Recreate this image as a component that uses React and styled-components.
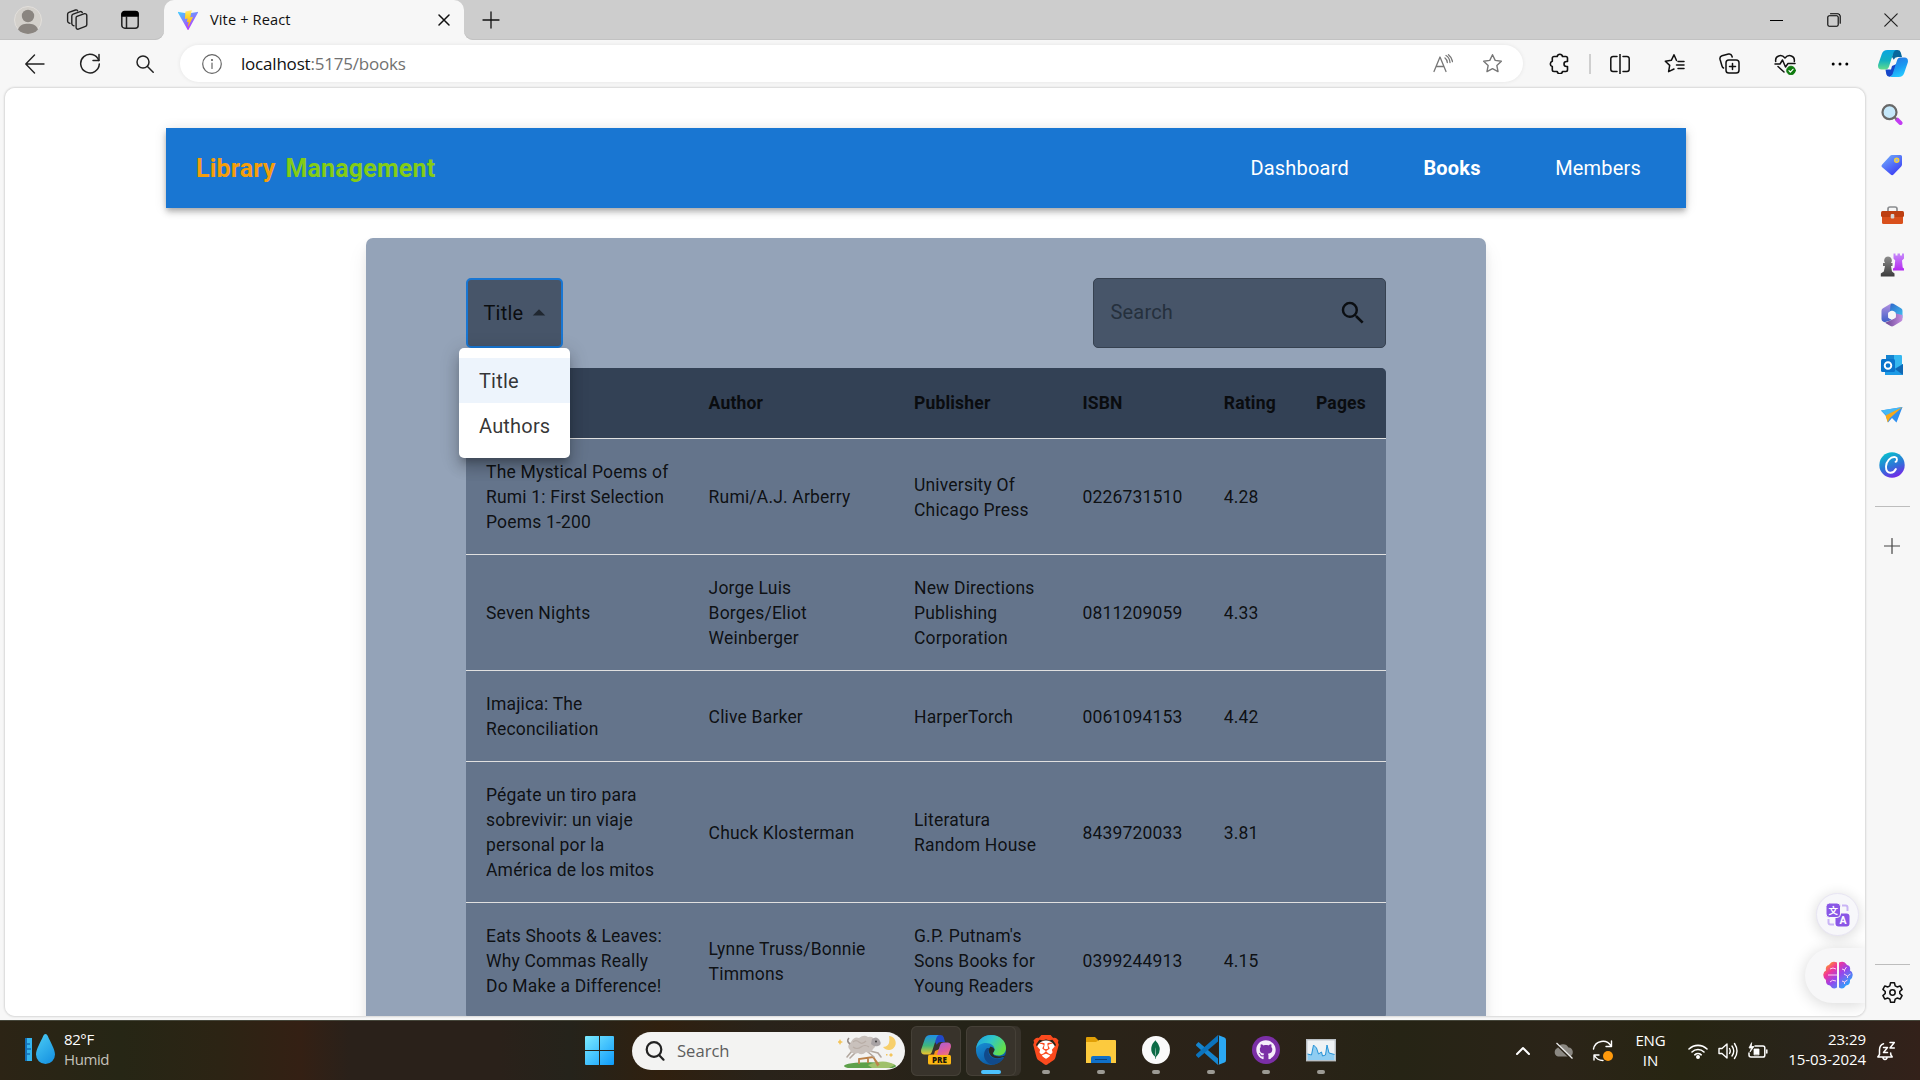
import React from 'react';
import styled, { createGlobalStyle, css } from 'styled-components';
import { MdSearch, MdArrowDropUp } from 'react-icons/md';
import { SiBrave, SiMongodb } from 'react-icons/si';
import { FaGithub } from 'react-icons/fa';

const Global = createGlobalStyle`
  *, *::before, *::after { box-sizing: border-box; }
  html, body { margin: 0; padding: 0; overflow: hidden; }
  svg { display: block; flex: none; }
`;

const SYSTEM = `"Open Sans", "Noto Sans", sans-serif`;
const WEB = `Roboto, "Liberation Sans", sans-serif`;

const Screen = styled.div`
  width: 1920px;
  height: 1080px;
  display: flex;
  flex-direction: column;
  background: #f7f7f7;
  font-family: ${SYSTEM};
  overflow: hidden;
`;

const Slot = styled.div`
  width: ${(p) => p.$w || 55}px;
  height: ${(p) => (p.$h ? p.$h + 'px' : '100%')};
  display: flex;
  align-items: center;
  justify-content: center;
  flex: none;
`;

/* Tab strip */
const TabStrip = styled.header`
  height: 40px;
  display: flex;
  flex: none;
`;
const StripLeft = styled.div`
  width: 164px;
  display: flex;
  align-items: center;
  background: #cdcdcd;
  border-bottom-right-radius: 9px;
  box-shadow: inset 0 -1px 0 #c2c2c2;
`;
const StripRight = styled.div`
  flex: 1;
  display: flex;
  align-items: center;
  background: #cdcdcd;
  border-bottom-left-radius: 9px;
  box-shadow: inset 0 -1px 0 #c2c2c2;
`;
const TabSlot = styled.div`
  width: 300px;
  background: linear-gradient(#cdcdcd 50%, #f7f7f7 50%);
`;
const Tab = styled.div`
  height: 40px;
  display: flex;
  align-items: center;
  padding: 0 10px 0 14px;
  background: #f7f7f7;
  border-radius: 10px 10px 0 0;
`;
const TabTitle = styled.span`
  flex: 1;
  margin-left: 12px;
  padding-bottom: 2px;
  font-size: 14.6px;
  line-height: 20px;
  letter-spacing: 0.12px;
  color: #111;
`;
const Spacer = styled.div`
  flex: 1;
`;

/* Toolbar */
const Toolbar = styled.div`
  height: 48px;
  flex: none;
  display: flex;
  align-items: center;
  padding: 0 0 1px 7px;
`;
const AddressBar = styled.div`
  width: 1343px;
  height: 37px;
  margin-left: 8px;
  display: flex;
  align-items: center;
  border-radius: 19px;
  background: #fff;
  box-shadow: 0 0 4px rgba(0, 0, 0, 0.08);
  padding-left: 22px;
`;
const Url = styled.span`
  flex: 1;
  margin-left: 19px;
  font-size: 17px;
  line-height: 24px;
  letter-spacing: -0.2px;
  color: #717171;
  b {
    font-weight: 400;
    color: #111;
  }
`;
const BarDivider = styled.div`
  width: 2px;
  height: 20px;
  margin-right: 1px;
  background: #cfcfcf;
`;

/* Body */
const Middle = styled.div`
  height: 932px;
  flex: none;
  display: flex;
  padding-left: 5px;
`;
const Viewport = styled.main`
  position: relative;
  width: 1860px;
  height: 928px;
  background: #fff;
  border-radius: 10px;
  overflow: hidden;
  padding: 40px 179px 0 161px;
  font-family: ${WEB};
`;
const ViewportFrame = styled.div`
  height: 928px;
  border-radius: 10px;
  box-shadow: 0 0 2px 1px rgba(0, 0, 0, 0.13);
`;
const NavBar = styled.nav`
  height: 80px;
  display: flex;
  align-items: center;
  padding: 0 45px 0 30px;
  background: #1976d2;
  color: #fff;
  box-shadow: 0 2.5px 5px -1px rgba(0, 0, 0, 0.2), 0 5px 6px rgba(0, 0, 0, 0.14),
    0 1px 12px rgba(0, 0, 0, 0.12);
`;
const Brand = styled.div`
  flex: 1;
  display: flex;
  gap: 10px;
  padding-top: 2px;
  font-size: 25px;
  font-weight: 700;
  line-height: 40px;
  letter-spacing: 0.17px;
`;
const BrandWord = styled.span`
  color: ${(p) => p.$color};
`;
const NavLinks = styled.div`
  display: flex;
  gap: 74.5px;
`;
const NavLink = styled.a`
  font-size: 20px;
  line-height: 30px;
  letter-spacing: 0.188px;
  font-weight: ${(p) => (p.$active ? 700 : 400)};
`;
const Panel = styled.section`
  margin: 30px auto 0;
  width: 1120px;
  height: 900px;
  padding: 40px 100px 0;
  background: #94a3b8;
  border-radius: 7px;
  box-shadow: 0 12px 20px rgba(0, 0, 0, 0.08), 0 5px 8px rgba(0, 0, 0, 0.06);
`;
const Controls = styled.div`
  display: flex;
  justify-content: space-between;
  margin-bottom: 20px;
`;
const SelectWrap = styled.div`
  position: relative;
`;
const SelectBox = styled.div`
  width: 97px;
  height: 70px;
  display: flex;
  align-items: center;
  padding-left: 15.5px;
  border: 2px solid #1976d2;
  border-radius: 5px;
  background: #475569;
  color: rgba(0, 0, 0, 0.87);
  font-size: 20px;
  letter-spacing: 0.19px;
  svg {
    margin-left: 0.5px;
    color: rgba(0, 0, 0, 0.54);
  }
`;
const Menu = styled.ul`
  position: absolute;
  left: -7px;
  top: 70px;
  z-index: 2;
  width: 111px;
  margin: 0;
  padding: 10px 0;
  list-style: none;
  background: #fff;
  border-radius: 5px;
  box-shadow: 0 6px 6px -3px rgba(0, 0, 0, 0.2), 0 10px 13px 1px rgba(0, 0, 0, 0.14),
    0 4px 18px 3px rgba(0, 0, 0, 0.12);
`;
const MenuItem = styled.li`
  height: 45px;
  padding: 1px 20px 0;
  font-size: 20px;
  line-height: 45px;
  letter-spacing: 0.19px;
  color: rgba(0, 0, 0, 0.8);
  background: ${(p) => (p.$selected ? '#edf4fc' : 'transparent')};
`;
const SearchField = styled.div`
  width: 293px;
  height: 70px;
  display: flex;
  align-items: center;
  justify-content: space-between;
  padding: 0 17px 0 16.5px;
  border: 1px solid #364150;
  border-radius: 5px;
  background: #475569;
  font-size: 20px;
  letter-spacing: 0.19px;
  color: #25303d;
  span {
    padding-bottom: 2px;
  }
  svg {
    color: #0b0e12;
  }
`;
const Table = styled.table`
  width: 920px;
  table-layout: fixed;
  border-collapse: separate;
  border-spacing: 0;
  border-radius: 5px;
  overflow: hidden;
  background: #64748b;
`;
const cell = css`
  padding: 20px;
  text-align: left;
  vertical-align: middle;
  border-bottom: 1px solid #e0e0e0;
  font-size: 17.5px;
  letter-spacing: 0.187px;
`;
const Th = styled.th`
  ${cell}
  width: ${(p) => p.$w}px;
  height: 71px;
  line-height: 30px;
  font-weight: 700;
  color: #0a0c0f;
  background: #334155;
`;
const Td = styled.td`
  ${cell}
  padding: 21px 20px 19px;
  line-height: 25px;
  color: rgba(0, 0, 0, 0.87);
  &:first-child {
    padding-right: 16px;
  }
`;

const FloatCircle = styled.div`
  position: absolute;
  left: 1811px;
  top: 805px;
  width: 43px;
  height: 43px;
  display: flex;
  align-items: center;
  justify-content: center;
  border-radius: 50%;
  background: #f7f7fa;
  border: 1px solid #e8e5f3;
  box-shadow: 0 2px 14px rgba(0, 0, 0, 0.16);
`;
const FloatPill = styled.div`
  position: absolute;
  left: 1800px;
  top: 860px;
  width: 60px;
  height: 55px;
  display: flex;
  align-items: center;
  padding: 0 0 1px 18px;
  border-radius: 28px 0 0 28px;
  background: #f7f7f8;
  box-shadow: 0 2px 16px rgba(0, 0, 0, 0.16);
`;

const Sidebar = styled.aside`
  width: 55px;
  height: 932px;
  padding: 2px 1px 0 0;
  display: flex;
  flex-direction: column;
  align-items: center;
`;
const SideDivider = styled.div`
  width: 35px;
  height: 1px;
  background: #bdbdbd;
  margin-top: ${(p) => p.$top || 0}px;
`;

/* Taskbar */
const Taskbar = styled.footer`
  height: 60px;
  flex: none;
  display: flex;
  align-items: center;
  color: #fff;
  border-top: 1px solid #45463a;
  background: linear-gradient(
    90deg,
    #2c2415 0,
    #262615 120px,
    #2c2414 220px,
    #342014 300px,
    #2a211a 350px,
    #2a211a 500px,
    #25231b 570px,
    #30200f 660px,
    #29231a 760px,
    #2b2219 860px,
    #242318 960px,
    #2a2318 1100px,
    #2b2218 1260px,
    #262415 1400px,
    #2b2418 1560px,
    #272512 1680px,
    #29241a 1800px,
    #33211a 1920px
  );
`;
const Weather = styled.div`
  width: 560px;
  display: flex;
  align-items: center;
  padding: 0 0 3px 25px;
`;
const TwoLines = styled.div`
  display: flex;
  flex-direction: column;
  text-align: ${(p) => p.$align || 'left'};
  width: ${(p) => (p.$w ? p.$w + 'px' : 'auto')};
  margin-left: ${(p) => p.$ml || 0}px;
  padding-bottom: ${(p) => p.$pb || 0}px;
  font-size: 15px;
  letter-spacing: ${(p) => p.$ls || -0.4}px;
  line-height: 20px;
  span + span {
    color: ${(p) => p.$second || '#fff'};
  }
`;
const TaskSearch = styled.div`
  width: 273px;
  height: 38px;
  margin: 0 6px 0 18px;
  display: flex;
  align-items: center;
  padding: 0 7px 0 13px;
  border-radius: 19px;
  background: #f3f3f2;
  font-size: 16.6px;
  color: #5d5d5d;
  span {
    flex: 1;
    margin-left: 12px;
  }
`;
const TaskButton = styled.div`
  width: ${(p) => p.$w || 55}px;
  height: 50px;
  flex: none;
  margin-right: ${(p) => p.$mr || 0}px;
  display: flex;
  flex-direction: column;
  align-items: center;
  padding-top: 9px;
  gap: 5px;
  border-radius: 6px;
  ${(p) =>
    p.$tile &&
    css`
      background: #38332b;
      box-shadow: inset 0 0 0 1px #454037;
    `}
  ${(p) =>
    p.$stacked &&
    css`
      box-shadow: inset 0 0 0 1px #454037, 5px 0 0 0 #38332b;
    `}
`;
const RunMark = styled.i`
  width: ${(p) => (p.$active ? 20 : 8)}px;
  height: 4px;
  border-radius: 2px;
  background: ${(p) => (p.$active ? '#4cc2ff' : '#9c9a94')};
`;
const Disc = styled.div`
  width: 28px;
  height: 28px;
  margin: 1px;
  border-radius: 50%;
  display: flex;
  align-items: center;
  justify-content: center;
  background: ${(p) => p.$bg};
  color: ${(p) => p.$fg};
`;
const BraveMark = styled.div`
  width: 30px;
  height: 30px;
  display: flex;
  justify-content: center;
  color: #fb4a1e;
  background: radial-gradient(circle, #fff 9px, transparent 10px);
`;

const Line = ({ w = 20, h, vb = '0 0 24 24', s = 1.5, c = '#222', children }) => (
  <svg width={w} height={h || w} viewBox={vb} fill="none" stroke={c} strokeWidth={s} strokeLinecap="round" strokeLinejoin="round">
    {children}
  </svg>
);

const Avatar = () => (
  <svg width="28" height="28" viewBox="0 0 28 28">
    <circle cx="14" cy="14" r="13.5" fill="#d3d0cb" stroke="#e2dfdb" />
    <circle cx="14" cy="10" r="6.2" fill="#8a8580" />
    <path d="M4 23.5C6 18.5 9.500 17.800 14 17.800s8 .7 10 5.700A13.500 13.500 0 0 1 4 23.500z" fill="#8a8580" />
  </svg>
);
const Workspaces = () => (
  <Line w={22} vb="0 0 22 22" s={1.4}>
    <path d="M11 7.300l7.500-2.600a1.800 1.800 0 0 1 2.300 1.700v9.200a2 2 0 0 1-1.300 1.800l-7.200 2.700a1.600 1.600 0 0 1-2.200-1.500V8.800a1.700 1.700 0 0 1 .9-1.500z" />
    <path d="M8 16.800l-1-.4a2 2 0 0 1-1.200-1.800V7a2 2 0 0 1 1.300-1.900l7-2.500a1.800 1.800 0 0 1 2.200 1" />
    <path d="M4 14.300l-1.200-.5a2 2 0 0 1-1.200-1.800V5.300a2 2 0 0 1 1.300-1.900L9.500 1a1.700 1.700 0 0 1 2.100.8" />
  </Line>
);
const TabActions = () => (
  <Line w={20} vb="0 0 20 20" s={1.5}>
    <rect x="1.800" y="1.800" width="16.400" height="16.400" rx="3" />
    <path d="M2 6V4a2.500 2.500 0 0 1 2.500-2.500h11A2.500 2.500 0 0 1 18 4v2z" fill="#000" stroke="#000" />
    <path d="M6.500 6.500V18" />
  </Line>
);
const ViteLogo = () => (
  <svg width="20" height="20" viewBox="0 0 20 20">
    <defs>
      <linearGradient id="vA" x1="0" y1="0" x2=".6" y2="1"><stop offset="0" stopColor="#41d1ff" /><stop offset="1" stopColor="#bd34fe" /></linearGradient>
      <linearGradient id="vB" x1="0" y1="0" x2="0" y2="1"><stop offset="0" stopColor="#ffea83" /><stop offset=".3" stopColor="#ffdd35" /><stop offset="1" stopColor="#ffa800" /></linearGradient>
    </defs>
    <path d="M19.900 2.700l-9.400 17a.5.500 0 0 1-.9 0L0 2.700a.5.500 0 0 1 .6-.8l9.400 1.700 9.300-1.700a.5.500 0 0 1 .6.8z" fill="url(#vA)" />
    <path d="M14.500 0L7.600 1.400a.3.300 0 0 0-.2.200L7 8.800c0 .2.100.3.300.3l1.900-.5c.2 0 .4.100.3.300l-.6 2.800c0 .2.100.4.300.3l1.200-.3c.2 0 .4.100.3.300l-.9 4.300c0 .3.300.4.500.2l4.600-9.300c.1-.2-.1-.4-.3-.3l-2 .3c-.2.100-.3-.1-.3-.3L13.700.4z" fill="url(#vB)" />
  </svg>
);
const CopilotLogo = ({ size = 30, pre }) => {
  const id = pre ? 'cp' : 'cc';
  return (
    <svg width={size} height={pre ? size : size * 0.9} viewBox={pre ? '0 0 30 30' : '0 0 30 27'}>
      <defs>
        <linearGradient id={id + 'a'} x1="0" y1="0" x2="0" y2="1">
          <stop offset="0" stopColor={pre ? '#1f8fe8' : '#0aa5e0'} /><stop offset=".55" stopColor={pre ? '#3fb77b' : '#14b1c0'} /><stop offset="1" stopColor={pre ? '#f0c52c' : '#63dd8b'} />
        </linearGradient>
        <linearGradient id={id + 'b'} x1="0" y1="0" x2=".4" y2="1">
          <stop offset="0" stopColor={pre ? '#a05be8' : '#2a6ee0'} /><stop offset=".6" stopColor={pre ? '#e0609a' : '#1b9af2'} /><stop offset="1" stopColor={pre ? '#ff8a55' : '#25c5ff'} />
        </linearGradient>
      </defs>
      <path d="M15 0h4.500a3.500 3.500 0 0 1 3.300 2.400L24 7h-4.500a4 4 0 0 0-3.700 2.700L14 7z" fill={pre ? '#2149c8' : '#07679c'} />
      <path d="M7.500 19.500h5.500l1-3.500 4.500-2-2.600 8.500A6 6 0 0 1 12 26.800h-.7a3.500 3.500 0 0 1-3-2.500z" fill={pre ? '#f7931e' : '#1647c9'} />
      <path d="M9.500 0h9c-1.500.2-2.600 1.400-3.200 3.200l-4.200 13c-.7 2.300-1.800 3.300-3.800 3.300H3.500C.6 19.500-.4 17.300.2 14.500L3.800 4C4.700 1.300 6.500 0 9.500 0z" fill={`url(#${id}a)`} />
      <path d="M20.500 27h-9c1.500-.2 2.600-1.400 3.200-3.200l4.200-13c.7-2.300 1.800-3.300 3.800-3.300h3.800c2.900 0 3.900 2.200 3.300 5L26.200 23c-.9 2.700-2.700 4-5.700 4z" fill={`url(#${id}b)`} />
      {pre && <rect x="7" y="20" width="23" height="9.500" rx="1.500" fill="#fdb813" />}
      {pre && <text x="18.500" y="27.500" textAnchor="middle" fontFamily={SYSTEM} fontSize="8" fontWeight="800" fill="#1b1708">PRE</text>}
    </svg>
  );
};

const GEAR = 'M10 1.800h4l.8 3.300 2 1.100 3.200-1 2 3.500-2.400 2.300v2l2.400 2.300-2 3.500-3.200-1-2 1.100-.8 3.300h-4l-.8-3.300-2-1.100-3.200 1-2-3.500L4.400 13v-2L2 8.700l2-3.500 3.200 1 2-1.100z';

const sideIcons = [
  <svg key="search" width="22" height="22" viewBox="0 0 22 22">
    <path d="M16 15.500l3.500 3.500" stroke="#c23cf2" strokeWidth="4" strokeLinecap="round" />
    <path d="M13 12.800l2.500 2.500" stroke="#777" strokeWidth="2" />
    <circle cx="8.500" cy="8.200" r="7" fill="#c5e8fa" stroke="#686868" strokeWidth="2.200" />
  </svg>,
  <svg key="tag" width="22" height="22" viewBox="0 0 22 22">
    <defs><linearGradient id="tg" x1="0" y1="0" x2=".7" y2="1"><stop offset="0" stopColor="#74b5fb" /><stop offset="1" stopColor="#3b3cf5" /></linearGradient></defs>
    <path d="M11 1h8.500A1.500 1.500 0 0 1 21 2.500v8a3 3 0 0 1-.8 2l-7.700 8a2 2 0 0 1-2.800 0L1.200 13.300a2 2 0 0 1 0-2.800L9 1.900A3 3 0 0 1 11 1z" fill="url(#tg)" />
    <circle cx="15.700" cy="6.300" r="2" fill="#8fb2f5" stroke="#f3cf3a" strokeWidth="1.500" />
  </svg>,
  <svg key="tools" width="23" height="20" viewBox="0 0 23 20">
    <path d="M7 6V4q0-2 2-2h5q2 0 2 2v2" fill="none" stroke="#8b8d90" strokeWidth="1.700" />
    <rect x="1" y="8" width="21" height="11" rx="1.500" fill="#d9501c" />
    <rect x="0" y="6" width="23" height="6" rx="1.500" fill="#bd3f12" />
    <rect x="9.700" y="9" width="3.600" height="4.500" rx="1" fill="#d5d5d5" />
  </svg>,
  <svg key="games" width="24" height="24" viewBox="0 0 24 24">
    <defs>
      <linearGradient id="rk" x1="0" y1="0" x2="0" y2="1"><stop offset="0" stopColor="#c68bfa" /><stop offset="1" stopColor="#b429f0" /></linearGradient>
      <linearGradient id="pw" x1="0" y1="0" x2="0" y2="1"><stop offset="0" stopColor="#8c8c8c" /><stop offset="1" stopColor="#3c3c3c" /></linearGradient>
    </defs>
    <path d="M13.500.5h2v2h2v-2h2.500v2h2v-2h2V5.500l-2 2 .7 7 1.300 1v2h-11v-2l1.500-1 .7-7-1.700-2z" fill="url(#rk)" />
    <path d="M8 3.500a4 4 0 0 1 3 6.500h1.500v3H11l1 5.500 2.500 2V23.500H.8V20.500l3-2L5 13H3v-3h2a4 4 0 0 1 3-6.500z" fill="url(#pw)" />
  </svg>,
  <svg key="m365" width="22" height="24" viewBox="0 0 22 24">
    <defs>
      <linearGradient id="ma" x1="0" y1="0" x2="1" y2="1"><stop offset="0" stopColor="#2f62c8" /><stop offset="1" stopColor="#3fc3f2" /></linearGradient>
      <linearGradient id="mb" x1="0" y1="0" x2="0" y2="1"><stop offset="0" stopColor="#b08fe0" /><stop offset="1" stopColor="#3d5fc8" /></linearGradient>
      <linearGradient id="mc" x1="0" y1="0" x2="1" y2="0"><stop offset="0" stopColor="#6a4796" /><stop offset="1" stopColor="#c48ee0" /></linearGradient>
    </defs>
    <path d="M9.500.800q1.500-.800 3 0l7.500 4.400q1.500.9 1.500 2.600V15l-7-4V9.500L11 7.500 7.500 9.500z" fill="url(#ma)" />
    <path d="M9.500.800L9 8.500l-1.800 1.200v5L11 17l-7.500 2.300L2 18.500Q.500 17.600.5 15.900V7.800q0-1.700 1.500-2.600z" fill="url(#mb)" />
    <path d="M21.500 12v3.900q0 1.700-1.500 2.600L12.500 23q-1.500.8-3 0L4 19.700l7-3 3.800-2.200V10.500z" fill="url(#mc)" />
    <circle cx="11" cy="12" r="3.900" fill="#f7f7f7" />
  </svg>,
  <svg key="outlook" width="22" height="22" viewBox="0 0 22 22">
    <rect x="5" y="1" width="16" height="14" rx="1.200" fill="#35b8f1" />
    <path d="M5 1h8v10H5z" fill="#1584d0" />
    <path d="M4 10l9 5 9-5v10q0 1-1 1H4z" fill="#1e9be6" />
    <path d="M22 10v11l-8-6z" fill="#1068b4" />
    <rect x="0" y="5" width="14" height="13" rx="1.500" fill="#0a74cc" />
    <circle cx="7" cy="11.500" r="3.300" fill="none" stroke="#fff" strokeWidth="1.900" />
  </svg>,
  <svg key="drop" width="22" height="18" viewBox="0 0 22 18">
    <path d="M0 4.500L21.500 1 15.500 16.500 11 12 7 16.500 5 10z" fill="#2f8ff0" />
    <path d="M0 4.500L21.500 1 5.500 9.500z" fill="#46b9f6" />
    <path d="M4.500 9.500L21.500 1 9 12l-2.300 4.500z" fill="#f6a91c" />
  </svg>,
  <svg key="canva" width="26" height="26" viewBox="0 0 26 26">
    <defs><linearGradient id="cv" x1=".3" y1="0" x2=".7" y2="1"><stop offset="0" stopColor="#08c0cd" /><stop offset=".55" stopColor="#2f72d8" /><stop offset="1" stopColor="#7a22ea" /></linearGradient></defs>
    <circle cx="13" cy="13" r="12.700" fill="url(#cv)" />
    <path d="M16.500 9.800c1.800-.6 2.200-4.200-.3-4.700C11.500 4.200 7.200 9.500 7 14.500c-.2 4.500 2 6.500 4.600 6.300 2.300-.1 4.200-1.600 5.300-3.800" fill="none" stroke="#fff" strokeWidth="1.900" strokeLinecap="round" />
  </svg>,
];

const columns = [
  ['', 222.6],
  ['Author', 205.4],
  ['Publisher', 168.4],
  ['ISBN', 141.4],
  ['Rating', 92.2],
  ['Pages', 90],
];
const books = [
  ['The Mystical Poems of Rumi 1: First Selection Poems 1-200', 'Rumi/A.J. Arberry', 'University Of Chicago Press', '0226731510', '4.28'],
  ['Seven Nights', 'Jorge Luis Borges/Eliot Weinberger', 'New Directions Publishing Corporation', '0811209059', '4.33'],
  ['Imajica: The Reconciliation', 'Clive Barker', 'HarperTorch', '0061094153', '4.42'],
  ['Pégate un tiro para sobrevivir: un viaje personal por la América de los mitos', 'Chuck Klosterman', 'Literatura Random House', '8439720033', '3.81'],
  ['Eats Shoots & Leaves: Why Commas Really Do Make a Difference!', 'Lynne Truss/Bonnie Timmons', "G.P. Putnam's Sons Books for Young Readers", '0399244913', '4.15'],
];

function BrowserTabs() {
  return (
    <TabStrip>
      <StripLeft>
        <Slot $w={56}><Avatar /></Slot>
        <Slot $w={42}><Workspaces /></Slot>
        <Slot $w={64}><TabActions /></Slot>
      </StripLeft>
      <TabSlot>
        <Tab>
          <ViteLogo />
          <TabTitle>Vite + React</TabTitle>
          <Slot $w={20}><Line w={12} vb="0 0 12 12" s={1.5} c="#111"><path d="M1 1l10 10M11 1L1 11" /></Line></Slot>
        </Tab>
      </TabSlot>
      <StripRight>
        <Slot $w={53}><Line w={18} vb="0 0 18 18" s={1.3} c="#111"><path d="M9 1v16M1 9h16" /></Line></Slot>
        <Spacer />
        <Slot $w={57}><Line w={13} vb="0 0 13 13" s={1} c="#000"><path d="M0 6.500h13" /></Line></Slot>
        <Slot $w={57}>
          <Line w={14} vb="0 0 14 14" s={1.1} c="#000">
            <rect x=".8" y="2.800" width="10.400" height="10.400" rx="1.500" />
            <path d="M3.500.800h7.200a2.500 2.500 0 0 1 2.500 2.500v7" />
          </Line>
        </Slot>
        <Slot $w={58}><Line w={14} vb="0 0 14 14" s={1.2} c="#222"><path d="M.8.800l12.400 12.400M13.200.800L.8 13.200" /></Line></Slot>
      </StripRight>
    </TabStrip>
  );
}

function BrowserToolbar() {
  return (
    <Toolbar>
      <Slot><Line w={20} vb="0 0 20 20" s={1.4}><path d="M19 10H1M9.500 1L.8 10l8.700 9" /></Line></Slot>
      <Slot><Line w={22} vb="0 0 22 22" s={1.5}><path d="M19.800 7.500A9.300 9.300 0 1 0 20.300 11" /><path d="M20 1.500v6h-6" /></Line></Slot>
      <Slot><Line w={18} vb="0 0 18 18" s={1.5}><circle cx="7" cy="7" r="6" /><path d="M11.500 11.500l5.700 5.700" /></Line></Slot>
      <AddressBar>
        <Line w={20} vb="0 0 20 20" s={1.2} c="#666"><circle cx="10" cy="10" r="9.300" /><path d="M10 9v5.500" /><circle cx="10" cy="6" r=".5" fill="#666" /></Line>
        <Url><b>localhost</b>:5175/books</Url>
        <Slot $w={50}>
          <Line w={20} vb="0 0 20 20" s={1.3} c="#777">
            <path d="M1 17.500L7 3l6 14.500M3 12.500h8" />
            <path d="M12 4q2 1.500 2.300 4.500M13 1.500q3.500 2 4 7M15.500.7q3.300 2.500 4 7" />
          </Line>
        </Slot>
        <Slot $w={49}>
          <Line w={21} vb="0 0 24 24" s={1.6} c="#777"><path d="M12 2l3.100 6.400 7 1-5.100 4.900 1.300 7-6.300-3.400-6.300 3.400 1.300-7L1.900 9.400l7-1z" /></Line>
        </Slot>
        <Slot $w={6} />
      </AddressBar>
      <Slot $w={6} />
      <Slot $w={60}>
        <Line w={21} vb="0 0 21 21" s={1.6} c="#111">
          <path d="M5 3.500h3.200a2.700 2.700 0 0 1 5.300 0h3.300a1.700 1.700 0 0 1 1.700 1.700v3.300h-1a2.500 2.500 0 0 0 0 5h1v3.300a1.700 1.700 0 0 1-1.700 1.700h-3.300a2.700 2.700 0 0 1-5.300 0H5a1.700 1.700 0 0 1-1.700-1.700v-3.300a2.700 2.700 0 0 1 0-5.200V5.200A1.700 1.700 0 0 1 5 3.500z" />
        </Line>
      </Slot>
      <BarDivider />
      <Slot>
        <Line w={20} vb="0 0 20 20" s={1.5} c="#111"><path d="M10 0v20M7 2.500H3A2.200 2.200 0 0 0 .8 4.700v10.600A2.200 2.200 0 0 0 3 17.500h4M13 2.500h4a2.200 2.200 0 0 1 2.200 2.200v10.600a2.200 2.200 0 0 1-2.200 2.200h-4" /></Line>
      </Slot>
      <Slot>
        <Line w={21} vb="0 0 21 21" s={1.5} c="#111"><path d="M12.500 7.500L10 1.800 7.300 7.300l-6 .9 4.400 4.200-1.100 6.300L10 16M14 8.500h6M12.500 12h7.500M14 15.500h6" /></Line>
      </Slot>
      <Slot>
        <Line w={21} vb="0 0 21 21" s={1.5} c="#111">
          <rect x="7" y="7" width="13" height="13" rx="2.800" />
          <path d="M13.500 10.500v6M10.500 13.500h6M4.500 15A3.500 3.500 0 0 1 3 13L1 6.200A3 3 0 0 1 3 2.800l6.500-1.700A3 3 0 0 1 13 3.200l.2.800" />
        </Line>
      </Slot>
      <Slot>
        <Line w={22} vb="0 0 22 22" s={1.5} c="#111">
          <path d="M1.700 8.500C.8 2.500 7.500.8 11 5c3.500-4.200 10.200-2.500 9.300 3.500M1 11h5l2.500-4 3 7L14 10.500h7M4 13.500l6 5.500" />
          <circle cx="17" cy="17.500" r="4.300" fill="#107c10" stroke="#107c10" strokeWidth="1" />
          <path d="M15 17.700l1.400 1.400 2.600-2.800" stroke="#fff" strokeWidth="1.200" />
        </Line>
      </Slot>
      <Slot>
        <svg width="18" height="4" viewBox="0 0 18 4"><circle cx="2.200" cy="2" r="1.500" /><circle cx="9" cy="2" r="1.500" /><circle cx="15.800" cy="2" r="1.500" /></svg>
      </Slot>
      <Slot $w={51}><CopilotLogo size={30} /></Slot>
    </Toolbar>
  );
}

function LibraryPage() {
  return (
    <Viewport>
      <NavBar>
        <Brand>
          <BrandWord $color="#f59e0b">Library</BrandWord>
          <BrandWord $color="#84cc16">Management</BrandWord>
        </Brand>
        <NavLinks>
          <NavLink>Dashboard</NavLink>
          <NavLink $active>Books</NavLink>
          <NavLink>Members</NavLink>
        </NavLinks>
      </NavBar>
      <Panel>
        <Controls>
          <SelectWrap>
            <SelectBox>Title<MdArrowDropUp size={30} /></SelectBox>
            <Menu>
              <MenuItem $selected>Title</MenuItem>
              <MenuItem>Authors</MenuItem>
            </Menu>
          </SelectWrap>
          <SearchField><span>Search</span><MdSearch size={30} /></SearchField>
        </Controls>
        <Table>
          <thead>
            <tr>{columns.map(([name, w]) => <Th key={w} $w={w}>{name}</Th>)}</tr>
          </thead>
          <tbody>
            {books.map((b) => (
              <tr key={b[3]}>{b.map((v) => <Td key={v}>{v}</Td>)}<Td /></tr>
            ))}
          </tbody>
        </Table>
      </Panel>
      <FloatCircle>
        <svg width="24" height="24" viewBox="0 0 24 24">
          <path d="M16 2.500h3.500q2 0 2 2V8M2.500 16v3.500q0 2 2 2H8" fill="none" stroke="#c9b4f5" strokeWidth="2" />
          <rect x="9.500" y="10.500" width="14" height="13" rx="3" fill="#8a57e6" />
          <rect x="0" y="0" width="14.500" height="14.500" rx="3.500" fill="#8a57e6" stroke="#f7f7fa" strokeWidth="1" />
          <text x="7.200" y="10.800" textAnchor="middle" fontSize="9.500" fontWeight="700" fontFamily='"Noto Sans CJK SC", sans-serif' fill="#fff">文</text>
          <text x="17" y="21.300" textAnchor="middle" fontSize="10.500" fontWeight="700" fontFamily={WEB} fill="#fff">A</text>
        </svg>
      </FloatCircle>
      <FloatPill>
        <svg width="30" height="28" viewBox="0 0 30 28">
          <defs><linearGradient id="br" x1="0" y1="0" x2="1" y2="1"><stop offset=".08" stopColor="#ffa01e" /><stop offset=".3" stopColor="#f0359a" /><stop offset=".52" stopColor="#9a44ea" /><stop offset=".85" stopColor="#2fa1fb" /></linearGradient></defs>
          <path d="M14 1.500v25Q9.500 29 7 24.500 2.500 24 3 19 0 17 .3 13.500.5 10.500 3 9.500 2 5 6 4q3-5 8-2.500zM16 1.500v25q4.500 2.500 7-2 4.500-.5 4-5.500 3-2 2.700-5.500Q29.500 10.500 27 9.500 28 5 24 4q-3-5-8-2.500z" fill="url(#br)" />
          <path d="M5 14h9M7 8q3-2 6 0M7 21q2-3 6-1M19 8l2.500 1 2-3M21.500 9v1.500M21 13l3.500 2 3-2M24.500 15v2M19 20l2.500 1 3-2M21.500 21v2" fill="none" stroke="#fbd3f3" strokeWidth="1" />
        </svg>
      </FloatPill>
    </Viewport>
  );
}

function EdgeSidebar() {
  return (
    <Sidebar>
      {sideIcons.map((icon) => <Slot key={icon.key} $w={54} $h={50}>{icon}</Slot>)}
      <SideDivider $top={16} />
      <Slot $w={54} $h={78}><Line w={16} vb="0 0 16 16" s={1.2} c="#444"><path d="M8 .500v15M.5 8h15" /></Line></Slot>
      <Spacer />
      <SideDivider />
      <Slot $w={54} $h={55}><Line w={23} s={1.6} c="#111"><path d={GEAR} /><circle cx="12" cy="12" r="2.800" /></Line></Slot>
    </Sidebar>
  );
}

function WindowsTaskbar() {
  return (
    <Taskbar>
      <Weather>
        <svg width="30" height="30" viewBox="0 0 30 30">
          <rect x="0" y="4" width="7" height="23" fill="#35b5ee" /><rect x="0" y="4" width="2" height="23" fill="#1470b8" />
          <path d="M2 10h3M2 15h4M2 20h3" stroke="#1470b8" strokeWidth="1.400" />
          <defs><linearGradient id="wd" x1="0" y1="0" x2=".6" y2="1"><stop offset="0" stopColor="#4ccdf5" /><stop offset="1" stopColor="#1b97e3" /></linearGradient></defs>
          <path d="M20.500 0c1 0 1.700.8 2.300 2C25.500 8.500 30 15 30 20.500a9.500 9.500 0 0 1-19 0C11 15 15.500 8.500 18.200 2c.6-1.200 1.300-2 2.300-2z" fill="url(#wd)" />
        </svg>
        <TwoLines $ml={9} $second="#c4c1ba"><span>82°F</span><span>Humid</span></TwoLines>
      </Weather>
      <Slot $w={25} />
      <svg width="29" height="29" viewBox="0 0 29 29">
        <defs><linearGradient id="wn" x1="0" y1="0" x2="1" y2="1"><stop offset="0" stopColor="#7cebff" /><stop offset="1" stopColor="#0e9bfb" /></linearGradient></defs>
        <path d="M1 0h13v14H0V1q0-1 1-1zM15 0h13q1 0 1 1v13H15zM0 15h14v14H1q-1 0-1-1zM15 15h14v13q0 1-1 1H15z" fill="url(#wn)" />
      </svg>
      <TaskSearch>
        <Line w={20} vb="0 0 20 20" s={2.2} c="#222"><circle cx="9" cy="8.500" r="7.300" /><path d="M14 14l4.500 4.700" /></Line>
        <span>Search</span>
        <svg width="60" height="34" viewBox="0 0 60 34">
          <ellipse cx="32" cy="32" rx="26" ry="3.800" fill="#5da04a" />
          <path d="M30 31q16-7 27 0l-6 3H34z" fill="#9fc06a" />
          <path d="M21 30v-5l14-2 6 8M30 23v6M36 24l4 8" fill="none" stroke="#bb824a" strokeWidth="1.800" />
          <path d="M14 17l-5 6M17 19l-5 5M32 17l8 2 3 4M30 18l6 5" stroke="#b3a89f" strokeWidth="1.600" strokeLinecap="round" fill="none" />
          <path d="M13 8q3-6 8-4 5-4 9-1 6-1 6 4 4 4-1 8-2 5-7 3-4 4-8 1-6 2-8-3-4-4 1-8z" fill="#c9c1bc" />
          <path d="M15 8q3-3 6 0t7-1M15 13q4 3 8 0t8 0" fill="none" stroke="#b9aea7" strokeWidth="1.200" />
          <path d="M34 5q5-4 8 2 2 4-2 5t-7-2z" fill="#a8a3a4" /><circle cx="38" cy="7.500" r=".9" fill="#333" />
          <path d="M51 2a7 7 0 1 1-6 11q8 0 6-11z" fill="#f7cf6a" />
          <path d="M2 5l1 2 2 1-2 1-1 2-1-2-2-1 2-1zM53 19l2 2-2 2-2-2zM48 20h1.500v1.500H48z" fill="#f3c55c" />
          <path d="M11 4q-3 3 1 6" stroke="#938a86" strokeWidth="1.600" fill="none" />
        </svg>
      </TaskSearch>
      <TaskButton $tile $w={50} $mr={5}><CopilotLogo size={30} pre /></TaskButton>
      <TaskButton $tile $stacked $w={50} $mr={2}>
        <svg width="30" height="30" viewBox="0 0 30 30">
          <defs>
            <linearGradient id="ea" x1="0" y1="0" x2="1" y2=".5"><stop offset="0" stopColor="#1c9de6" /><stop offset=".5" stopColor="#2fc6c9" /><stop offset="1" stopColor="#63e04a" /></linearGradient>
            <linearGradient id="eb" x1="0" y1="0" x2=".5" y2="1"><stop offset="0" stopColor="#1b9de2" /><stop offset="1" stopColor="#0c59a4" /></linearGradient>
          </defs>
          <circle cx="15" cy="15" r="15" fill="url(#eb)" />
          <path d="M.1 14C1 5 7.500 0 15 0c9 0 15 6 15 13 0 5-3.500 7.500-7.500 7.500-3.500 0-5.500-1-5.500-2.200 0-1 1.500-1.600 1.500-4C18.500 11 15 8 10 8 5 8 1.500 10.500.1 14z" fill="url(#ea)" />
          <path d="M11 13c-2 2-3 4-3 7 0 5 4 9 9 9.800 5-.6 9-4 11-7.300-5 2.500-12 2-14.500-2.500-1.500-2.500-1-5 .5-7z" fill="#114a8b" />
          <path d="M14.500 11.500c-2 2-2.200 5-.8 7.500 2.500 4.500 8 5 12.500 3.200 1-.5 2.300-.2 1.500 1l1.800-3q-3 1.500-7 1.300-5.500-.5-5.500-3.200c0-1 1.500-1.600 1.500-4q-1-2.300-4-2.800z" fill="#2b2a25" />
        </svg>
        <RunMark $active />
      </TaskButton>
      <TaskButton>
        <BraveMark><SiBrave size={30} /></BraveMark>
        <RunMark />
      </TaskButton>
      <TaskButton>
        <svg width="30" height="30" viewBox="0 0 30 30">
          <path d="M0 3q0-1 1-1h8l3 3v5H0z" fill="#e09f06" />
          <path d="M0 7h10l3-2h16q1 0 1 1v22H0z" fill="#fcca3e" />
          <path d="M5 28v-5q0-2 2-2h16q2 0 2 2v5z" fill="#1070c8" /><path d="M9 24.500h12" stroke="#0a427c" />
        </svg>
        <RunMark />
      </TaskButton>
      <TaskButton><Disc $bg="#fafafa" $fg="#0c6b46"><SiMongodb size={19} /></Disc><RunMark /></TaskButton>
      <TaskButton>
        <svg width="30" height="30" viewBox="0 0 30 30">
          <path d="M2.500 7L22 23.500V30L.5 11q-1-1 0-2z" fill="#1585cf" />
          <path d="M2.500 23L22 6.500V0L.5 19q-1 1 0 2z" fill="#0b73bd" />
          <path d="M22 0l6.500 2.500Q30 3 30 5v20q0 2-1.500 2.500L22 30q1 0 1-2V2q0-2-1-2z" fill="#2ba8f3" />
        </svg>
        <RunMark />
      </TaskButton>
      <TaskButton><Disc $bg="#7b2fa6" $fg="#f6eefb"><FaGithub size={20} /></Disc><RunMark /></TaskButton>
      <TaskButton>
        <svg width="30" height="30" viewBox="0 0 30 30">
          <rect x=".7" y="4.700" width="28.600" height="21" fill="#eef2f5" stroke="#b9bfc4" strokeWidth="1.400" />
          <path d="M1.500 19l4 1 2-10 3 3 2 6 3-2 1 4 3-1 1.500-10 2 8 5.500 1.500V25h-27z" fill="#8fcdf2" />
          <path d="M1.500 19l4 1 2-10 3 3 2 6 3-2 1 4 3-1 1.500-10 2 8 5.500 1.500" fill="none" stroke="#2592d6" />
        </svg>
        <RunMark />
      </TaskButton>
      <Spacer />
      <Slot $w={40}><Line w={14} h={9} vb="0 0 14 9" s={2} c="#fff"><path d="M1 8l6-6 6 6" /></Line></Slot>
      <Slot $w={40}>
        <svg width="21" height="18" viewBox="0 0 21 18">
          <path d="M5 14.500a4.500 4.500 0 0 1-.5-8.500A6 6 0 0 1 15.500 5.500 4.600 4.600 0 0 1 16.500 14.500z" fill="#8b8882" />
          <path d="M2.500 1.500L18.500 17" stroke="#2b2418" strokeWidth="2" /><path d="M3.500 1L19.500 16.500" stroke="#eee" strokeWidth="1.300" />
        </svg>
      </Slot>
      <Slot $w={40}>
        <Line w={22} vb="0 0 22 22" s={1.4} c="#fff">
          <path d="M1.500 9A9.500 9.500 0 0 1 19 6M19.500 1v5.500H14M2 20v-5h5M2.500 15.500A9.500 9.500 0 0 0 11 20.500" />
          <circle cx="16" cy="16" r="5" fill="#ff9a0c" stroke="none" />
        </Line>
      </Slot>
      <TwoLines $align="center" $w={55} $pb={2} $ls={-0.1}><span>ENG</span><span>IN</span></TwoLines>
      <Slot $w={40}>
        <Line w={20} h={16} vb="0 0 20 16" s={1.6} c="#fff"><path d="M1 6a13 13 0 0 1 18 0M4 9a8.500 8.500 0 0 1 12 0M6.800 11.800a4.700 4.700 0 0 1 6.400 0" /><circle cx="10" cy="14" r="1.200" fill="#fff" /></Line>
      </Slot>
      <Slot $w={20}>
        <Line w={20} h={18} vb="0 0 20 18" s={1.4} c="#fff"><path d="M1 6.500h3L9 2v14l-5-4.500H1zM11.500 6.500q1.500 2.500 0 5M14 4q3.500 5 0 10M16.500 1.500q5 7.500 0 15" /></Line>
      </Slot>
      <Slot $w={38}>
        <Line w={21} h={17} vb="0 0 21 17" s={1.5} c="#fff"><path d="M8 4h8q1.800 0 1.800 1.800v7.400Q17.800 15 16 15H4q-2 0-2-2v-2" /><path d="M19.800 8v3" /><path d="M7 12.500V7h5v5.500zM4.500 1L2 6h2.500L3 10l4-5.500H4.500z" fill="#fff" strokeWidth=".8" /></Line>
      </Slot>
      <TwoLines $align="right" $w={90} $ls={-0.05} $pb={3}><span>23:29</span><span>15-03-2024</span></TwoLines>
      <Slot $w={40}>
        <Line w={20} vb="0 0 20 20" s={1.5} c="#fff"><path d="M7.500 2.800Q3.500 4 3.500 9v4.500L1.800 16h14.400l-1.500-2.500V12M7 17q2 3 4 0" /><path d="M7.500 6.500h4l-4 5h4M14 1.500h4.300L14 7h4.300" /></Line>
      </Slot>
      <Slot $w={14} />
    </Taskbar>
  );
}

export default function App() {
  return (
    <Screen>
      <Global />
      <BrowserTabs />
      <BrowserToolbar />
      <Middle>
        <ViewportFrame><LibraryPage /></ViewportFrame>
        <EdgeSidebar />
      </Middle>
      <WindowsTaskbar />
    </Screen>
  );
}
